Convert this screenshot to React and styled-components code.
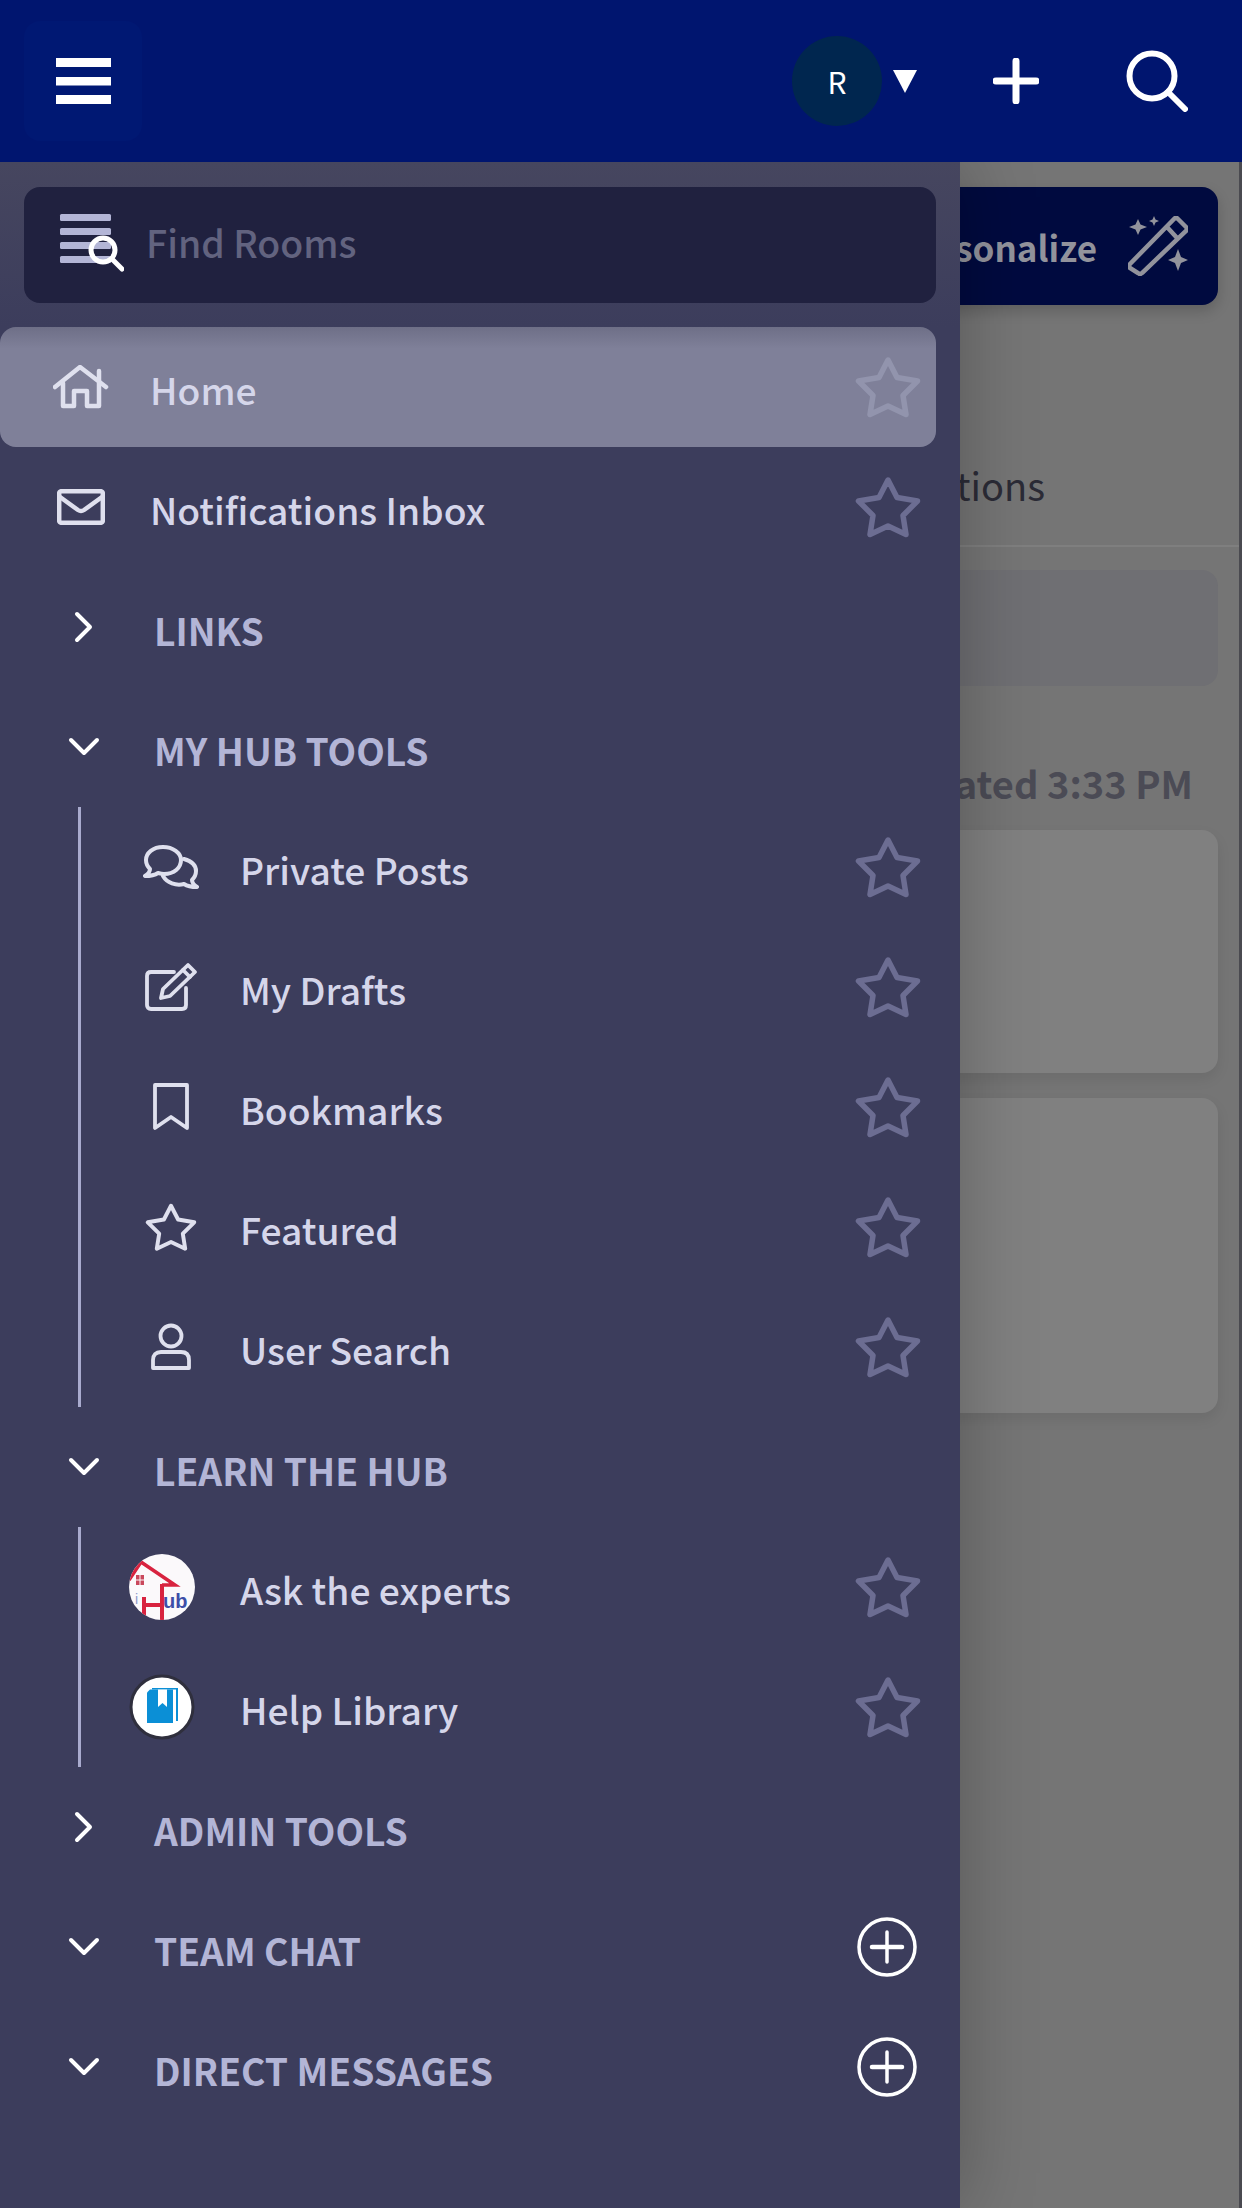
import React from "react";
import styled, { createGlobalStyle } from "styled-components";

const GlobalStyle = createGlobalStyle`
  html, body {
    margin: 0;
    padding: 0;
    background: #757575;
  }
  * {
    box-sizing: border-box;
  }
  body {
    font-family: "Noto Sans CJK JP", "Noto Sans", sans-serif;
  }
`;

const Page = styled.div`
  width: 1242px;
  height: 2208px;
  display: flex;
  flex-direction: column;
  overflow: hidden;
`;

const Header = styled.header`
  height: 162px;
  flex: none;
  background: #00156f;
  display: flex;
  align-items: center;
  position: relative;
  z-index: 2;
  padding: 0 54px 0 24px;
`;

const MenuButton = styled.button`
  width: 118px;
  height: 120px;
  border: 0;
  border-radius: 16px;
  background: #001873;
  display: flex;
  align-items: center;
  justify-content: center;
  padding: 0 0 0 1px;
`;

const HeaderActions = styled.div`
  margin-left: auto;
  display: flex;
  align-items: center;
`;

const Avatar = styled.div`
  width: 90px;
  height: 90px;
  border-radius: 50%;
  background: #00264f;
  color: #ffffff;
  font-size: 30px;
  display: flex;
  align-items: center;
  justify-content: center;
`;

const Caret = styled.svg`
  margin-left: 11px;
  margin-right: 76px;
`;

const PlusIcon = styled.svg`
  margin-right: 87px;
`;

const Main = styled.main`
  flex: 1;
  position: relative;
  background: #757575;
  border-right: 3px solid #4a4a50;
  padding: 25px 21px 0 0;
`;

const Toolbar = styled.div`
  display: flex;
  justify-content: flex-end;
`;

const PersonalizeButton = styled.div`
  height: 118px;
  width: 400px;
  border-radius: 16px;
  background: #000a3f;
  color: #92939c;
  font-size: 35px;
  font-weight: 700;
  display: flex;
  align-items: center;
  justify-content: flex-end;
  gap: 31px;
  padding-right: 30px;
  box-shadow: 0 6px 14px rgba(0, 0, 0, 0.18);
`;

const Tabs = styled.div`
  height: 242px;
  margin-right: -21px;
  border-bottom: 2px solid #7f7f7f;
  display: flex;
  justify-content: flex-end;
  align-items: flex-end;
  padding: 0 194px 38px 0;
`;

const TabLabel = styled.span`
  color: #2b2b36;
  font-size: 38px;
  line-height: 44px;
`;

const FilterBar = styled.div`
  height: 116px;
  margin: 23px 0 0 24px;
  border-radius: 16px;
  background: #6f6f73;
`;

const Updated = styled.div`
  margin: 75px 25px 0 0;
  height: 44px;
  line-height: 44px;
  text-align: right;
  color: #4b4b55;
  font-size: 38px;
  font-weight: 700;
`;

const Card = styled.div`
  height: ${(p) => p.$height}px;
  margin: ${(p) => p.$top}px 0 0 24px;
  border-radius: 16px;
  background: #808080;
  box-shadow: 0 6px 14px rgba(0, 0, 0, 0.08);
`;

const Drawer = styled.nav`
  position: absolute;
  left: 0;
  top: 0;
  bottom: 0;
  width: 960px;
  background: #3c3d5c;
  box-shadow: 0 0 70px rgba(0, 0, 0, 0.26);
`;

const SearchSection = styled.div`
  height: 165px;
  padding: 25px 24px 0;
  background: linear-gradient(#46465f, #3c3d5c);
`;

const SearchBox = styled.div`
  height: 116px;
  border-radius: 16px;
  background: #20213f;
  display: flex;
  align-items: center;
  padding-left: 34px;
  gap: 22px;
`;

const Placeholder = styled.span`
  color: #62637f;
  font-size: 37.4px;
  font-weight: 500;
  position: relative;
  top: -3px;
`;

const Row = styled.div`
  width: 936px;
  height: 120px;
  display: flex;
  align-items: center;
  border-radius: 16px;
  padding-right: 15px;
  background: ${(p) =>
    p.$active ? "linear-gradient(#6e6f87, #7f8099 18%)" : "transparent"};
`;

const IconBox = styled.span`
  width: 66px;
  height: 66px;
  flex: none;
  margin-left: ${(p) => (p.$section ? 51 : 48)}px;
  display: flex;
  align-items: center;
  justify-content: center;
  color: #dfe0ee;
`;

const ChildIconBox = styled(IconBox)`
  margin-left: ${(p) => (p.$logo ? 48 : 57)}px;
  margin-right: ${(p) => (p.$logo ? 9 : 0)}px;
`;

const Label = styled.span`
  margin-left: 36px;
  flex: 1;
  color: #d5d6ea;
  font-size: 37.2px;
  font-weight: 500;
  line-height: 44px;
  position: relative;
  top: 2px;
  white-space: nowrap;
`;

const SectionLabel = styled(Label)`
  margin-left: 37px;
  top: 3px;
  color: #b3b5d6;
  font-weight: 700;
`;

const Trailing = styled.span`
  width: 66px;
  height: 66px;
  flex: none;
  display: flex;
  align-items: center;
  justify-content: center;
  color: ${(p) => (p.$active ? "#9294ad" : "#6c6d92")};
`;

const PlusCircleSvg = styled.svg`
  position: relative;
  left: -1px;
`;

const Children = styled.div`
  margin-left: 78px;
  width: 858px;
  border-left: 3px solid #a9abce;

  ${Row} {
    width: 855px;
  }
`;

const Star = ({ active }) => (
  <Trailing $active={active}>
    <svg width="68" height="64" viewBox="0 0 66 62" fill="none" stroke="currentColor" strokeWidth="5.5" strokeLinejoin="round">
      <path d="M33 4 42 21.5 62.5 25 48 39.5 51 58.5 33 50 15 58.5 18 39.5 3.5 25 24 21.5Z" />
    </svg>
  </Trailing>
);

const HomeIcon = () => (
  <svg width="56" height="44" viewBox="0 0 56 44" fill="none" stroke="currentColor" strokeWidth="4.5" strokeLinejoin="round" strokeLinecap="round">
    <path d="M2 22 27 2 53 22" />
    <path d="M46 6V16" />
    <path d="M10 18V41H21V26H34V41H46V18" />
  </svg>
);

const MailIcon = () => (
  <svg width="48" height="36" viewBox="0 0 48 36" fill="none" stroke="currentColor" strokeWidth="4.5" strokeLinejoin="round" strokeLinecap="round">
    <rect x="2.2" y="2.2" width="43.6" height="31.6" rx="2" />
    <path d="M3 8 21 21Q24 23 27 21L45 8" />
  </svg>
);

const ChatIcon = () => (
  <svg width="56" height="44" viewBox="0 0 56 44" fill="none" stroke="currentColor" strokeWidth="4" strokeLinejoin="round" strokeLinecap="round">
    <path d="M20 2C10 2 3 8 3 15C3 19 5 22 7 24C7 27 5 29 2 31C8 31 12 30 15 28C17 28.500 19 29 21 29C31 29 38 23 38 15C38 8 30 2 20 2Z" />
    <path d="M41 14C48 16 53 20 53 26C53 30 51 33 49 35C49 38 51 40 54 42C48 42 44 41 41 39C33 41 24 38 20 31" />
  </svg>
);

const DraftIcon = () => (
  <svg width="54" height="50" viewBox="0 0 54 50" fill="none" stroke="currentColor" strokeWidth="3.8" strokeLinejoin="round" strokeLinecap="round">
    <path d="M42 26V43Q42 47 38 47H7Q3 47 3 43V14Q3 10 7 10H30" />
    <path d="M44 3 51 10 26 34 17 36 19 27Z" />
    <path d="M39 8 46 15" />
  </svg>
);

const BookmarkIcon = () => (
  <svg width="38" height="48" viewBox="0 0 38 48" fill="none" stroke="currentColor" strokeWidth="3.8" strokeLinejoin="round">
    <path d="M3 2H35V45L19 34 3 45Z" />
  </svg>
);

const FeaturedIcon = () => (
  <svg width="52" height="50" viewBox="0 0 66 62" fill="none" stroke="currentColor" strokeWidth="5" strokeLinejoin="round">
    <path d="M33 4 42 21.5 62.5 25 48 39.5 51 58.500 33 50 15 58.500 18 39.5 3.5 25 24 21.500Z" />
  </svg>
);

const UserIcon = () => (
  <svg width="42" height="48" viewBox="0 0 42 48" fill="none" stroke="currentColor" strokeWidth="3.8" strokeLinejoin="round">
    <circle cx="21" cy="13" r="10.5" />
    <path d="M3 45V37Q3 29 11 29H31Q39 29 39 37V45Z" />
  </svg>
);

const Chevron = ({ open }) =>
  open ? (
    <svg width="32" height="20" viewBox="0 0 32 20" fill="none" stroke="#ffffff" strokeWidth="4" strokeLinecap="round" strokeLinejoin="round">
      <path d="M3 3 16 16 29 3" />
    </svg>
  ) : (
    <svg width="20" height="32" viewBox="0 0 20 32" fill="none" stroke="#ffffff" strokeWidth="4" strokeLinecap="round" strokeLinejoin="round">
      <path d="M3 3 16 16 3 29" />
    </svg>
  );

const CirclePlus = () => (
  <PlusCircleSvg width="60" height="60" viewBox="0 0 60 60" fill="none" stroke="#ffffff" strokeWidth="3.500" strokeLinecap="round">
    <circle cx="30" cy="30" r="28" />
    <path d="M30 15V45" />
    <path d="M15 30H45" strokeWidth="4.500" />
  </PlusCircleSvg>
);

const HubLogo = () => (
  <svg width="66" height="66" viewBox="0 0 66 66">
    <defs>
      <clipPath id="hubClip">
        <circle cx="33" cy="33" r="33" />
      </clipPath>
    </defs>
    <circle cx="33" cy="33" r="33" fill="#fbf9fb" />
    <g clipPath="url(#hubClip)">
      <path d="M0 26 12 8 46 31H33" fill="none" stroke="#d8233f" strokeWidth="3.500" />
      <path d="M33 30V66M15 43V66M15 51H33" fill="none" stroke="#d8233f" strokeWidth="4" />
      <rect x="7" y="21" width="8" height="10" fill="#c9485c" />
      <path d="M7 26H15M11 21V31" stroke="#fbf9fb" strokeWidth="1" />
    </g>
    <text x="34" y="54" fill="#3d4fa8" fontSize="20" fontWeight="700" fontFamily="Liberation Sans, sans-serif">ub</text>
    <text x="6" y="50" fill="#8d97c9" fontSize="14" fontFamily="Liberation Sans, sans-serif">i</text>
  </svg>
);

const HelpLogo = () => (
  <svg width="66" height="66" viewBox="0 0 66 66">
    <circle cx="33" cy="33" r="31" fill="#ffffff" stroke="#2f2f3d" strokeWidth="3" />
    <path d="M21 15.500H44V49H18V18.500Z" fill="#0b8fd6" />
    <path d="M23 14H49V47H47V15.500H23Z" fill="#0b8fd6" />
    <path d="M29 15.500H38V33L33.500 29 29 33Z" fill="#ffffff" />
  </svg>
);

const App = () => {
  const tools = [
    { label: "Private Posts", icon: <ChatIcon /> },
    { label: "My Drafts", icon: <DraftIcon /> },
    { label: "Bookmarks", icon: <BookmarkIcon /> },
    { label: "Featured", icon: <FeaturedIcon /> },
    { label: "User Search", icon: <UserIcon /> },
  ];
  const learn = [
    { label: "Ask the experts", icon: <HubLogo /> },
    { label: "Help Library", icon: <HelpLogo /> },
  ];

  return (
    <Page>
      <GlobalStyle />
      <Header>
        <MenuButton aria-label="Menu">
          <svg width="55" height="46" viewBox="0 0 55 46" fill="#ffffff">
            <rect y="0" width="55" height="9" />
            <rect y="19" width="55" height="8.500" />
            <rect y="37" width="55" height="9" />
          </svg>
        </MenuButton>
        <HeaderActions>
          <Avatar>R</Avatar>
          <Caret width="24" height="24" viewBox="0 0 24 24" fill="#ffffff">
            <path d="M0 1H24L12 24Z" />
          </Caret>
          <PlusIcon width="46" height="46" viewBox="0 0 46 46" stroke="#ffffff" strokeWidth="7" strokeLinecap="round">
            <path d="M23 3V43" />
            <path d="M3 23H43" />
          </PlusIcon>
          <svg width="62" height="62" viewBox="0 0 62 62" fill="none" stroke="#ffffff" strokeWidth="6" strokeLinecap="round">
            <circle cx="26" cy="26" r="22.500" />
            <path d="M42 42 59 59" />
          </svg>
        </HeaderActions>
      </Header>
      <Main>
        <Toolbar>
          <PersonalizeButton>
            Personalize
            <svg width="60" height="60" viewBox="0 0 60 60" fill="#92939c">
              <path d="M2 48 46 3Q48 1 50 3L58 11Q60 13 58 15L14 57Q12 59 10 57L2 52Q0 50 2 48ZM39 11 50 23" fill="none" stroke="#92939c" strokeWidth="4.500" />
              <path d="M10 3 12.500 8.500 19 11 12.500 13.500 10 19 7.500 13.500 1 11 7.500 8.500Z" />
              <path d="M26 0 27.500 3.500 31 5 27.500 6.500 26 10 24.500 6.500 21 5 24.500 3.500Z" />
              <path d="M50 33 53 41 60 44 53 47 50 55 47 47 40 44 47 41Z" />
            </svg>
          </PersonalizeButton>
        </Toolbar>
        <Tabs>
          <TabLabel>Notifications</TabLabel>
        </Tabs>
        <FilterBar />
        <Updated>Last updated 3:33 PM</Updated>
        <Card $height={243} $top={25} />
        <Card $height={315} $top={25} />
        <Drawer>
          <SearchSection>
            <SearchBox>
              <svg width="66" height="62" viewBox="0 0 66 62">
                <g fill="#b3b5d6">
                  <rect x="2" y="0" width="51" height="7" rx="1.500" />
                  <rect x="2" y="14" width="51" height="7" rx="1.500" />
                  <rect x="2" y="28" width="51" height="7" rx="1.500" />
                  <rect x="2" y="42" width="51" height="7" rx="1.500" />
                </g>
                <circle cx="45" cy="36" r="12" fill="none" stroke="#ffffff" strokeWidth="5" />
                <path d="M54 45 64 55" stroke="#ffffff" strokeWidth="5" strokeLinecap="round" />
              </svg>
              <Placeholder>Find Rooms</Placeholder>
            </SearchBox>
          </SearchSection>

          <Row $active>
            <IconBox><HomeIcon /></IconBox>
            <Label>Home</Label>
            <Star active />
          </Row>
          <Row>
            <IconBox><MailIcon /></IconBox>
            <Label>Notifications Inbox</Label>
            <Star />
          </Row>
          <Row>
            <IconBox $section><Chevron /></IconBox>
            <SectionLabel>LINKS</SectionLabel>
          </Row>
          <Row>
            <IconBox $section><Chevron open /></IconBox>
            <SectionLabel>MY HUB TOOLS</SectionLabel>
          </Row>
          <Children>
            {tools.map((t) => (
              <Row key={t.label}>
                <ChildIconBox>{t.icon}</ChildIconBox>
                <Label>{t.label}</Label>
                <Star />
              </Row>
            ))}
          </Children>
          <Row>
            <IconBox $section><Chevron open /></IconBox>
            <SectionLabel>LEARN THE HUB</SectionLabel>
          </Row>
          <Children>
            {learn.map((t) => (
              <Row key={t.label}>
                <ChildIconBox $logo>{t.icon}</ChildIconBox>
                <Label>{t.label}</Label>
                <Star />
              </Row>
            ))}
          </Children>
          <Row>
            <IconBox $section><Chevron /></IconBox>
            <SectionLabel>ADMIN TOOLS</SectionLabel>
          </Row>
          <Row>
            <IconBox $section><Chevron open /></IconBox>
            <SectionLabel>TEAM CHAT</SectionLabel>
            <Trailing><CirclePlus /></Trailing>
          </Row>
          <Row>
            <IconBox $section><Chevron open /></IconBox>
            <SectionLabel>DIRECT MESSAGES</SectionLabel>
            <Trailing><CirclePlus /></Trailing>
          </Row>
        </Drawer>
      </Main>
    </Page>
  );
};

export default App;
